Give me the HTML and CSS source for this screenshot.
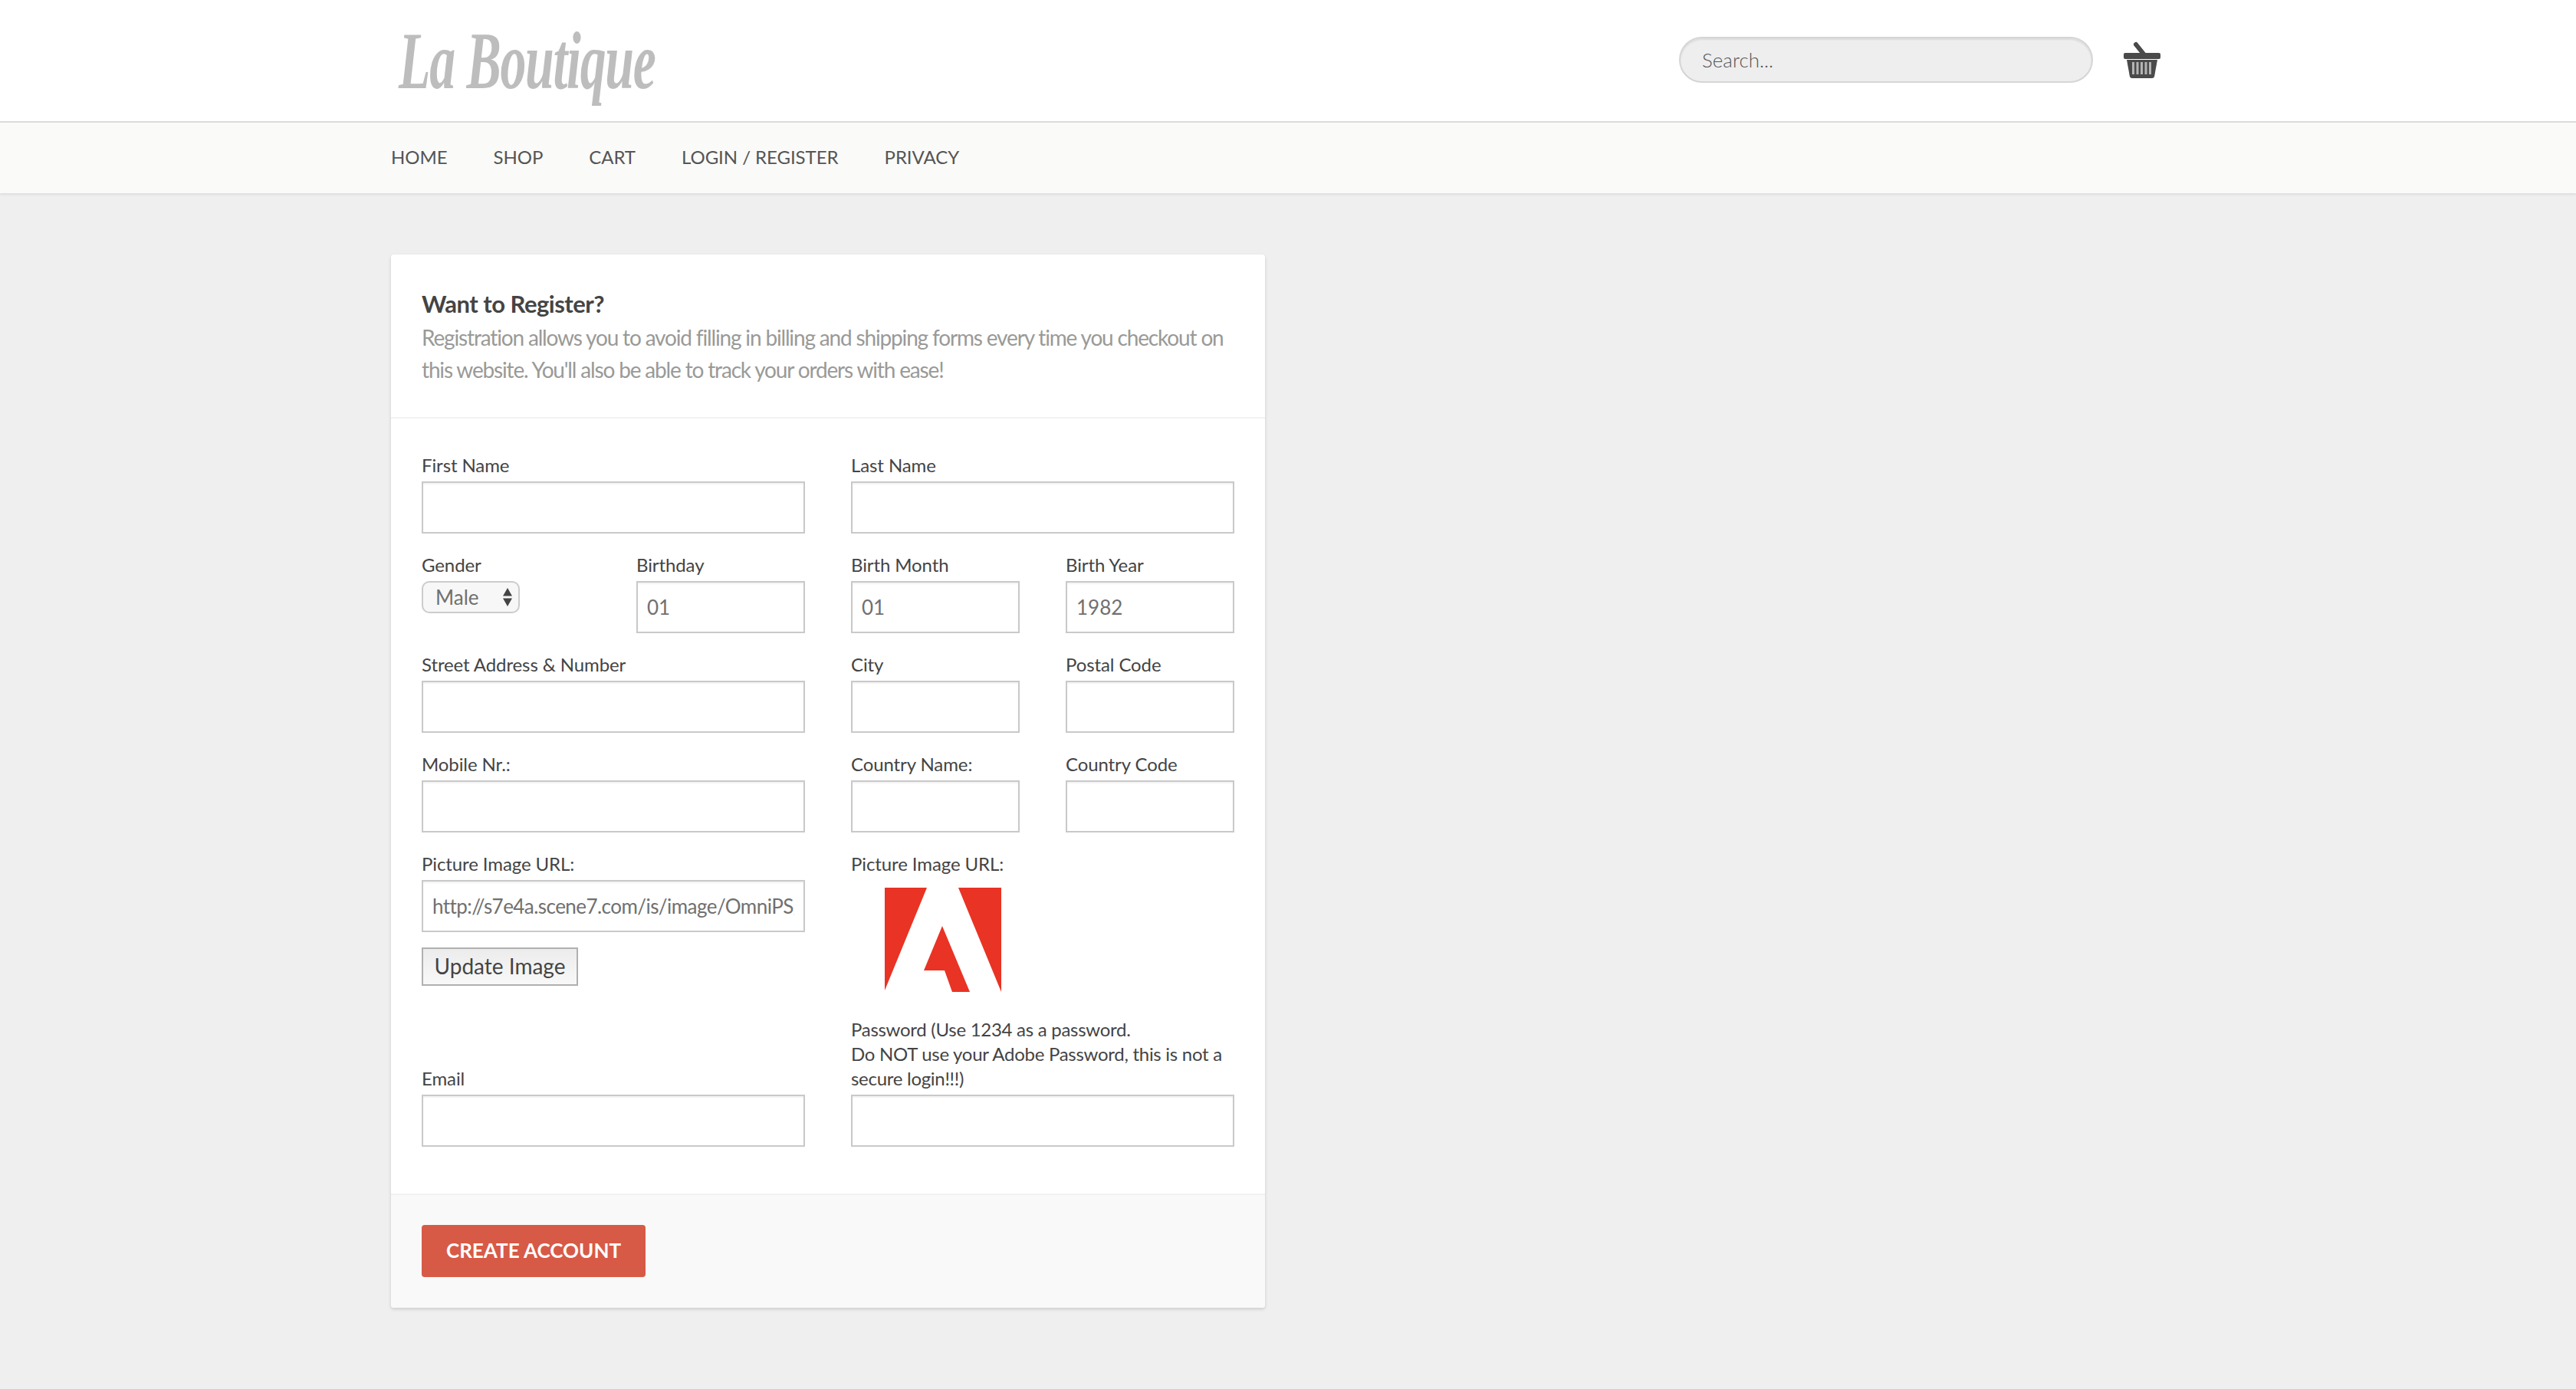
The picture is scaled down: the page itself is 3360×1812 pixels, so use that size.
FILE: index.html
```html
<!DOCTYPE html>
<html lang="en">
<head>
    <meta charset="UTF-8">
    <title>La Boutique - Register</title>
    <link rel="stylesheet" href="styles.css">
</head>
<body>
    <header class="site-header">
        <div class="wrap header-inner">
            <a class="logo" href="#">La Boutique</a>
            <div class="header-tools">
                <input class="search" type="text" placeholder="Search...">
                <a class="basket" href="#" aria-label="Cart">
                    <svg width="50" height="48" viewBox="0 0 50 48">
                        <path d="M17 4 L29 19" stroke="#4a4a4a" stroke-width="6" stroke-linecap="round" fill="none"/>
                        <rect x="1" y="15" width="48" height="8" rx="2" fill="#4a4a4a"/>
                        <path fill="#4a4a4a" d="M5 24 H45 L41 46 Q40.500 48 38 48 H12 Q9.500 48 9 46 Z"/>
                        <path fill="#b4b4b4" d="M12 27 H15 V43 H12 Z M17.500 27 H20.500 V43 H17.500 Z M23 27 H26 V43 H23 Z M28.500 27 H31.500 V43 H28.500 Z M34 27 H37 V43 H34 Z"/>
                    </svg>
                </a>
            </div>
        </div>
    </header>

    <nav class="site-nav">
        <div class="wrap nav-links">
            <a href="#">Home</a>
            <a href="#">Shop</a>
            <a href="#">Cart</a>
            <a href="#">Login / Register</a>
            <a href="#">Privacy</a>
        </div>
    </nav>

    <main class="wrap">
        <form class="card">
            <div class="card-head">
                <h1>Want to Register?</h1>
                <p>Registration allows you to avoid filling in billing and shipping forms every time you checkout on this website. You'll also be able to track your orders with ease!</p>
            </div>

            <div class="card-body">
                <div class="form-row">
                    <div class="field"><label>First Name</label><input type="text"></div>
                    <div class="field"><label>Last Name</label><input type="text"></div>
                </div>

                <div class="form-row">
                    <div class="split">
                        <div class="field">
                            <label>Gender</label>
                            <span class="select-wrap">
                                <select><option>Male</option><option>Female</option></select>
                                <svg class="select-arrows" width="12" height="24" viewBox="0 0 12 24">
                                    <path d="M6 0 L12 10.500 H0 Z M0 13.500 H12 L6 24 Z" fill="#444"/>
                                </svg>
                            </span>
                        </div>
                        <div class="field"><label>Birthday</label><input type="text" value="01"></div>
                    </div>
                    <div class="split">
                        <div class="field"><label>Birth Month</label><input type="text" value="01"></div>
                        <div class="field"><label>Birth Year</label><input type="text" value="1982"></div>
                    </div>
                </div>

                <div class="form-row">
                    <div class="field"><label>Street Address &amp; Number</label><input type="text"></div>
                    <div class="split">
                        <div class="field"><label>City</label><input type="text"></div>
                        <div class="field"><label>Postal Code</label><input type="text"></div>
                    </div>
                </div>

                <div class="form-row">
                    <div class="field"><label>Mobile Nr.:</label><input type="text"></div>
                    <div class="split">
                        <div class="field"><label>Country Name:</label><input type="text"></div>
                        <div class="field"><label>Country Code</label><input type="text"></div>
                    </div>
                </div>

                <div class="form-row picture-row">
                    <div class="field">
                        <label>Picture Image URL:</label>
                        <input class="url-input" type="text" value="http://s7e4a.scene7.com/is/image/OmniPS/adobe_logo">
                        <button class="update-btn" type="button">Update Image</button>
                    </div>
                    <div class="field">
                        <label>Picture Image URL:</label>
                        <svg class="adobe-logo" width="152" height="136" viewBox="0 0 152 136">
                            <path fill="#e93324" d="M0 0 H55 L0 134 Z M152 0 H96 L152 136 Z M75 50 L111 136 H88 L78 108 H51 Z"/>
                        </svg>
                    </div>
                </div>

                <div class="form-row login-row">
                    <div class="field"><label>Email</label><input type="text"></div>
                    <div class="field"><label class="long-label">Password (Use 1234 as a password.<br>Do NOT use your Adobe Password, this is not a secure login!!!)</label><input type="password"></div>
                </div>
            </div>

            <div class="card-foot">
                <button class="create-btn" type="submit">Create Account</button>
            </div>
        </form>
    </main>
</body>
</html>
```

FILE: styles.css
```css
* {
    box-sizing: border-box;
    margin: 0;
    padding: 0;
}

body {
    background-color: #efefef;
    color: #444;
    font-family: Lato, "Open Sans", sans-serif;
    font-size: 24px;
    line-height: 32px;
    min-height: 100vh;
}

a {
    color: inherit;
    text-decoration: none;
}

.wrap {
    width: 2340px;
    margin-left: 510px;
}

.site-header {
    background: #fff;
    height: 160px;
    border-bottom: 2px solid #dcdcdc;
}

.header-inner {
    display: flex;
    justify-content: space-between;
    align-items: flex-start;
}

.logo {
    margin: 22px 0 0 10px;
    font-family: "Liberation Serif", serif;
    font-style: italic;
    font-weight: 700;
    font-size: 106px;
    line-height: 116px;
    color: #bdbdbd;
    letter-spacing: -2px;
    transform: scaleX(0.64);
    transform-origin: left;
}

.header-tools {
    display: flex;
    align-items: flex-start;
    gap: 39px;
    margin: 48px 31px 0 0;
}

.search {
    width: 540px;
    height: 60px;
    padding: 0 28px;
    background: #eee;
    border: 2px solid #d5d5d5;
    border-radius: 30px;
    box-shadow: inset 0 2px 2px rgba(0, 0, 0, 0.08);
    font: 300 26px Lato, sans-serif;
    outline: none;
}

.search::placeholder {
    color: #555;
    opacity: 1;
}

.basket {
    display: block;
    margin-top: 6px;
    height: 48px;
}

.site-nav {
    background: #fafaf8;
    height: 92px;
    box-shadow: 0 2px 3px rgba(0, 0, 0, 0.08);
}

.nav-links {
    display: flex;
    gap: 60px;
    align-items: center;
    height: 92px;
    padding-bottom: 2px;
}

.nav-links a {
    text-transform: uppercase;
    color: #555;
    font-size: 24px;
    letter-spacing: -0.05px;
}

.card {
    width: 1140px;
    margin-top: 80px;
    background: #fff;
    border-radius: 4px;
    box-shadow: 0 2px 4px rgba(0, 0, 0, 0.15);
}

.card-head {
    padding: 42px 40px 0;
    height: 214px;
    border-bottom: 2px solid #f2f2f2;
}

h1 {
    font-size: 31px;
    line-height: 45px;
    font-weight: 700;
    color: #444;
    letter-spacing: -0.5px;
}

.card-head p {
    font-size: 28px;
    line-height: 42px;
    color: #999a97;
    letter-spacing: -1.16px;
}

.card-body {
    padding: 45px 40px 0;
    height: 1011px;
}

.form-row,
.split {
    display: grid;
    grid-template-columns: 1fr 1fr;
    column-gap: 60px;
}

.form-row {
    margin-bottom: 25px;
}

.field label {
    display: block;
    margin-bottom: 5px;
    letter-spacing: -0.1px;
}

.field .long-label {
    letter-spacing: -0.28px;
}

.field input {
    display: block;
    width: 100%;
    height: 68px;
    padding: 0 12px;
    border: 2px solid #c9c9c9;
    box-shadow: inset 0 2px 2px rgba(0, 0, 0, 0.05);
    font: 400 26px Lato, sans-serif;
    color: #707070;
    outline: none;
}

.field .url-input {
    letter-spacing: -0.55px;
}

.select-wrap {
    display: inline-block;
    position: relative;
}

select {
    display: block;
    appearance: none;
    width: 128px;
    height: 42px;
    padding-left: 16px;
    background: #f7f7f7;
    border: 2px solid #ccc;
    border-radius: 10px;
    font: 400 26px Lato, sans-serif;
    color: #707070;
}

.select-arrows {
    position: absolute;
    top: 9px;
    right: 10px;
}

.update-btn {
    display: block;
    margin-top: 20px;
    width: 204px;
    height: 50px;
    padding-bottom: 2px;
    background: linear-gradient(#ececec, #f8f8f8);
    border: 2px solid #b0b0b0;
    font: 400 28px Lato, sans-serif;
    color: #444;
}

.adobe-logo {
    display: block;
    margin: 15px 0 0 44px;
}

.picture-row {
    height: 191px;
}

.card-foot {
    height: 149px;
    padding: 39px 40px 0;
    background: #f9f9f9;
    border-top: 2px solid #f2f2f2;
    border-radius: 0 0 4px 4px;
}

.create-btn {
    width: 292px;
    height: 68px;
    padding-bottom: 2px;
    background: #d75a47;
    border: none;
    border-radius: 4px;
    color: #fff;
    font: 700 26px Lato, sans-serif;
    text-transform: uppercase;
}

.login-row {
    align-items: end;
}
```
